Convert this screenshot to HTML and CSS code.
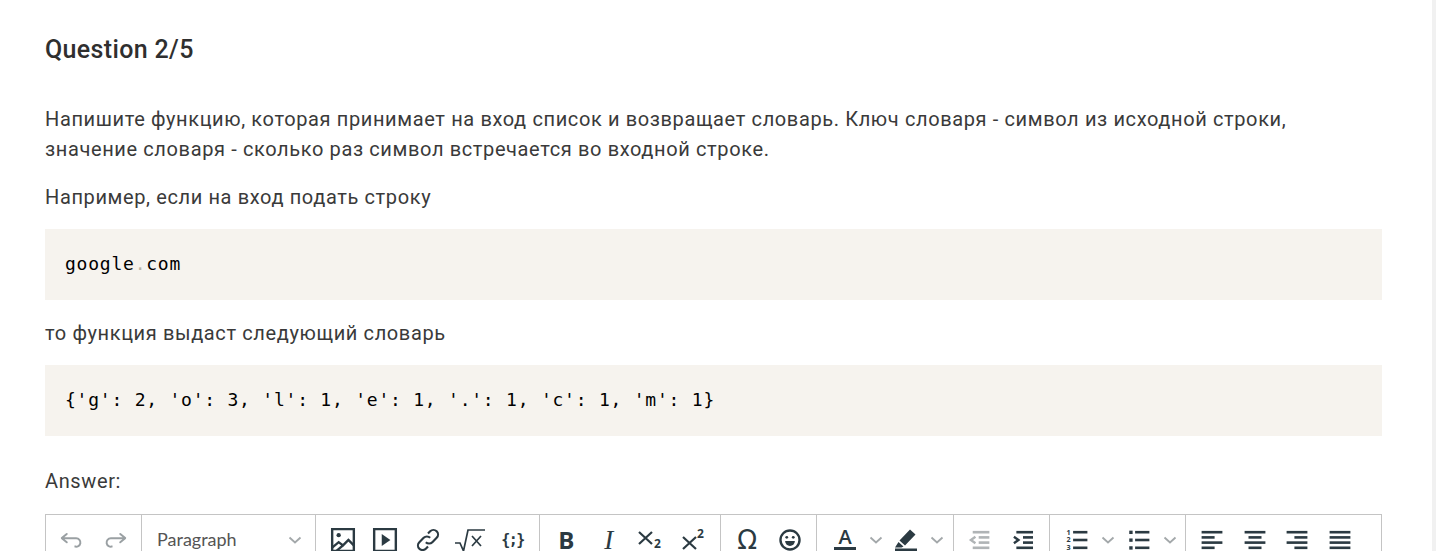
FILE: index.html
```html
<!DOCTYPE html>
<html lang="ru">
<head>
<meta charset="utf-8">
<title>Question 2/5</title>
<link rel="stylesheet" href="styles.css">
</head>
<body>
<main class="page">
  <h1 class="title">Question 2/5</h1>
  <p class="text first">Напишите функцию, которая принимает на вход список и возвращает словарь. Ключ словаря - символ из исходной строки, значение словаря - сколько раз символ встречается во входной строке.</p>
  <p class="text lead">Например, если на вход подать строку</p>
  <pre class="code">google<span class="dot">.</span>com</pre>
  <p class="text lead">то функция выдаст следующий словарь</p>
  <pre class="code">{'g': 2, 'o': 3, 'l': 1, 'e': 1, '.': 1, 'c': 1, 'm': 1}</pre>
  <div class="answer">Answer:</div>
  <div class="toolbar">
    <div class="group g-history">
      <span class="btn wide"><svg class="ico muted" viewBox="0 0 20 20"><path d="M5.042 9.367l2.189 1.837a.75.75 0 0 1-.965 1.149l-3.788-3.18a.747.747 0 0 1-.21-.284.75.75 0 0 1 .17-.945L6.23 4.762a.75.75 0 1 1 .964 1.15L4.863 7.866h8.917A.75.75 0 0 1 14 7.9a4 4 0 1 1-1.477 7.718l.344-1.489a2.5 2.5 0 1 0 1.094-4.73l.008-.032H5.042z"/></svg></span>
      <span class="btn wide"><svg class="ico muted" viewBox="0 0 20 20"><path d="M14.958 9.367l-2.189 1.837a.75.75 0 0 0 .965 1.149l3.788-3.18a.747.747 0 0 0 .21-.284.75.75 0 0 0-.17-.945L13.77 4.762a.75.75 0 1 0-.964 1.15l2.331 1.955H6.22A.75.75 0 0 0 6 7.9a4 4 0 1 0 1.477 7.718l-.344-1.489A2.5 2.5 0 1 1 6.039 9.4l-.008-.032h8.927z"/></svg></span>
    </div>
    <div class="group g-para">
      <span class="para-label">Paragraph</span>
      <svg class="chev" viewBox="0 0 14 8"><path d="M1.5 1.5L7 6.5l5.5-5"/></svg>
    </div>
    <div class="group g-insert">
      <span class="btn"><svg class="ico" viewBox="0 0 24 24"><path class="line" d="M2 2h20v20H2z"/><circle class="fill" cx="8" cy="7.500" r="2"/><path class="line" d="M2 19l6-5 4 3 5-5 5 5M6 22l6-5"/></svg></span>
      <span class="btn"><svg class="ico" viewBox="0 0 24 24"><path class="line" d="M2 2h20v20H2z"/><path class="fill" d="M9 6.500l8 5.500-8 5.500z"/></svg></span>
      <span class="btn"><svg class="ico" viewBox="0 0 24 24"><path class="line link" d="M10 14a4.200 4.200 0 0 0 6 0l4-4a4.200 4.200 0 0 0-6-6l-2 2M14 10a4.200 4.200 0 0 0-6 0l-4 4a4.200 4.200 0 0 0 6 6l2-2"/></svg></span>
      <span class="btn"><svg class="ico math" viewBox="0 0 32 24"><path class="line thin" d="M1 15h5l3.500 8L14 2h17M18 8l9 10M27 8l-9 10"/></svg></span>
      <span class="btn"><span class="glyph code-glyph">{;}</span></span>
    </div>
    <div class="group g-basic">
      <span class="btn"><span class="glyph bold">B</span></span>
      <span class="btn"><span class="glyph italic">I</span></span>
      <span class="btn"><svg class="ico" viewBox="0 0 26 26"><path class="line" d="M1 5l13 12M14 5L1 17"/><text class="small" x="16" y="21">2</text></svg></span>
      <span class="btn"><svg class="ico" viewBox="0 0 26 26"><path class="line" d="M2 10l13 12M15 10L2 22"/><text class="small" x="16" y="11">2</text></svg></span>
    </div>
    <div class="group g-special">
      <span class="btn"><span class="glyph omega">Ω</span></span>
      <span class="btn"><svg class="ico" viewBox="0 0 24 24"><circle class="line" cx="12" cy="12" r="8.800"/><circle class="fill" cx="9" cy="9.500" r="1.300"/><circle class="fill" cx="15" cy="9.500" r="1.300"/><path class="fill" d="M7.500 13h9a4.500 4.500 0 0 1-9 0z"/></svg></span>
    </div>
    <div class="group g-color">
      <span class="btn"><svg class="ico" viewBox="0 0 26 26"><text class="letter" x="13" y="17">A</text><rect class="fill" x="2" y="20" width="22" height="3"/></svg></span>
      <span class="arrow"><svg class="chev" viewBox="0 0 14 8"><path d="M1.500 1.500L7 6.500l5.500-5"/></svg></span>
      <span class="btn"><svg class="ico" viewBox="0 0 26 26"><path class="fill" d="M17 2.500l5.500 5L12 18.500l-5.500-5zM5.500 15l5 4.500-2 1H2z"/><rect class="fill" x="2" y="21.500" width="22" height="3"/></svg></span>
      <span class="arrow"><svg class="chev" viewBox="0 0 14 8"><path d="M1.500 1.500L7 6.500l5.500-5"/></svg></span>
    </div>
    <div class="group g-indent">
      <span class="btn"><svg class="ico muted-soft" viewBox="0 0 20 20"><rect x="4.400" y="3" width="12.800" height="2"/><rect x="9" y="7" width="8.200" height="2"/><rect x="9" y="11" width="8.200" height="2"/><rect x="4.400" y="15" width="12.800" height="2"/><path class="arr soft" d="M6.500 7.500L3 10l3.500 2.500"/></svg></span>
      <span class="btn"><svg class="ico" viewBox="0 0 20 20"><rect x="4.900" y="3" width="12.800" height="2"/><rect x="10" y="7" width="7.700" height="2"/><rect x="10" y="11" width="7.700" height="2"/><rect x="4.900" y="15" width="12.800" height="2"/><path class="arr" d="M3 7.500L6.500 10 3 12.500"/></svg></span>
    </div>
    <div class="group g-lists">
      <span class="btn"><svg class="ico" viewBox="0 0 20 20"><text class="num" x="2" y="5.800">1</text><text class="num" x="2" y="11.800">2</text><text class="num" x="2" y="17.800">3</text><rect x="7" y="3" width="11" height="2"/><rect x="7" y="9" width="11" height="2"/><rect x="7" y="15" width="11" height="2"/></svg></span>
      <span class="arrow"><svg class="chev" viewBox="0 0 14 8"><path d="M1.500 1.500L7 6.500l5.500-5"/></svg></span>
      <span class="btn"><svg class="ico" viewBox="0 0 20 20"><rect x="2.500" y="2.800" width="2.600" height="2.600"/><rect x="2.500" y="8.800" width="2.600" height="2.600"/><rect x="2.500" y="14.800" width="2.600" height="2.600"/><rect x="7" y="3" width="11" height="2"/><rect x="7" y="9" width="11" height="2"/><rect x="7" y="15" width="11" height="2"/></svg></span>
      <span class="arrow"><svg class="chev" viewBox="0 0 14 8"><path d="M1.500 1.500L7 6.500l5.500-5"/></svg></span>
    </div>
    <div class="group g-align">
      <span class="btn"><svg class="ico" viewBox="0 0 20 20"><rect x="2" y="3" width="16" height="2"/><rect x="2" y="7" width="10" height="2"/><rect x="2" y="11" width="16" height="2"/><rect x="2" y="15" width="10" height="2"/></svg></span>
      <span class="btn"><svg class="ico" viewBox="0 0 20 20"><rect x="2" y="3" width="16" height="2"/><rect x="5" y="7" width="10" height="2"/><rect x="2" y="11" width="16" height="2"/><rect x="5" y="15" width="10" height="2"/></svg></span>
      <span class="btn"><svg class="ico" viewBox="0 0 20 20"><rect x="2" y="3" width="16" height="2"/><rect x="8" y="7" width="10" height="2"/><rect x="2" y="11" width="16" height="2"/><rect x="8" y="15" width="10" height="2"/></svg></span>
      <span class="btn"><svg class="ico" viewBox="0 0 20 20"><rect x="2" y="3" width="16" height="2"/><rect x="2" y="7" width="16" height="2"/><rect x="2" y="11" width="16" height="2"/><rect x="2" y="15" width="16" height="2"/></svg></span>
    </div>
  </div>
</main>
</body>
</html>
```
FILE: styles.css
```css
* { box-sizing: border-box; }
html, body { margin: 0; height: 100%; overflow: hidden; background: #fff; }
body { position: relative; font-family: Roboto, "Noto Sans", sans-serif; color: #333; }
body::after { content: ""; position: absolute; top: 0; right: 0; bottom: 0; width: 4px; background: #f1f1f1; }
.page { padding: 36px 54px 0 45px; }
.title { margin: 0; font-size: 25px; line-height: 28px; font-weight: 500; color: #2f2f2f; letter-spacing: 0.35px; }
.text { margin: 0 0 18px; font-size: 20px; line-height: 30px; letter-spacing: 0.62px; color: #3a3a3a; }
.text.first { margin-top: 40px; max-width: 1260px; }
.text.lead { margin-bottom: 17px; }
.code { margin: 0 0 18px; height: 71px; padding: 0 20px; background: #f6f3ee; font-family: "DejaVu Sans Mono", monospace; font-size: 18px; line-height: 69px; letter-spacing: 0.77px; color: #000; }
.dot { color: #b9b3a5; }
.answer { margin-top: 30px; font-size: 20px; line-height: 30px; font-weight: 400; letter-spacing: 0.62px; color: #3a3a3a; }
.toolbar { margin-top: 18px; display: grid; grid-template-columns: 96px 174px 224px 181px 96px 137px 96px 136px 197px; height: 60px; border: 1px solid #c4c4c4; border-bottom: 0; }
.group { display: flex; align-items: flex-start; justify-content: center; padding-top: 4px; border-right: 1px solid #c4c4c4; height: 100%; }
.group:last-child { border-right: 0; justify-content: flex-start; padding-left: 5px; }
.btn { flex: none; width: 42.5px; height: 42px; display: flex; align-items: center; justify-content: center; }
.btn.wide { width: 45px; }
.arrow { flex: none; width: 19px; height: 42px; display: flex; align-items: center; justify-content: center; }
.ico { display: block; width: 26px; height: 26px; fill: #2b3a42; }
.ico.muted { fill: #9aa0a3; }
.ico.muted-soft { fill: #b0b4b6; }
.ico.math { width: 32px; height: 24px; }
.line { fill: none; stroke: #2b3a42; stroke-width: 2.200; }
.line.thin { stroke-width: 1.700; }
.line.link { stroke-width: 2; }
.arr { fill: none; stroke: #2b3a42; stroke-width: 1.800; }
.arr.soft { stroke: #b0b4b6; }
.fill { fill: #2b3a42; stroke: none; }
.chev { display: block; width: 14px; height: 8px; fill: none; stroke: #a3a8aa; stroke-width: 1.800; }
.g-para { justify-content: space-between; padding: 4px 13px 0 15px; }
.g-para .chev { margin-top: 17px; }
.para-label { font-family: Lato, sans-serif; font-size: 18px; line-height: 40px; color: #555; }
.glyph { display: block; line-height: 26px; color: #2b3a42; }
.bold { font-family: "Open Sans", sans-serif; font-weight: 700; font-size: 24px; line-height: 24px; }
.italic { font-family: "Liberation Serif", serif; font-style: italic; font-size: 27px; line-height: 24px; }
.omega { font-family: "DejaVu Sans", sans-serif; font-size: 26px; }
.code-glyph { font-family: "DejaVu Sans Mono", monospace; font-weight: 700; font-size: 15px; letter-spacing: -1.500px; }
.small { font-family: "Open Sans", sans-serif; font-weight: 700; font-size: 12px; fill: #2b3a42; }
.letter { font-family: "Open Sans", sans-serif; font-weight: 600; font-size: 20px; text-anchor: middle; fill: #2b3a42; }
.num { font-family: "Open Sans", sans-serif; font-weight: 700; font-size: 5.500px; fill: #2b3a42; }
```
